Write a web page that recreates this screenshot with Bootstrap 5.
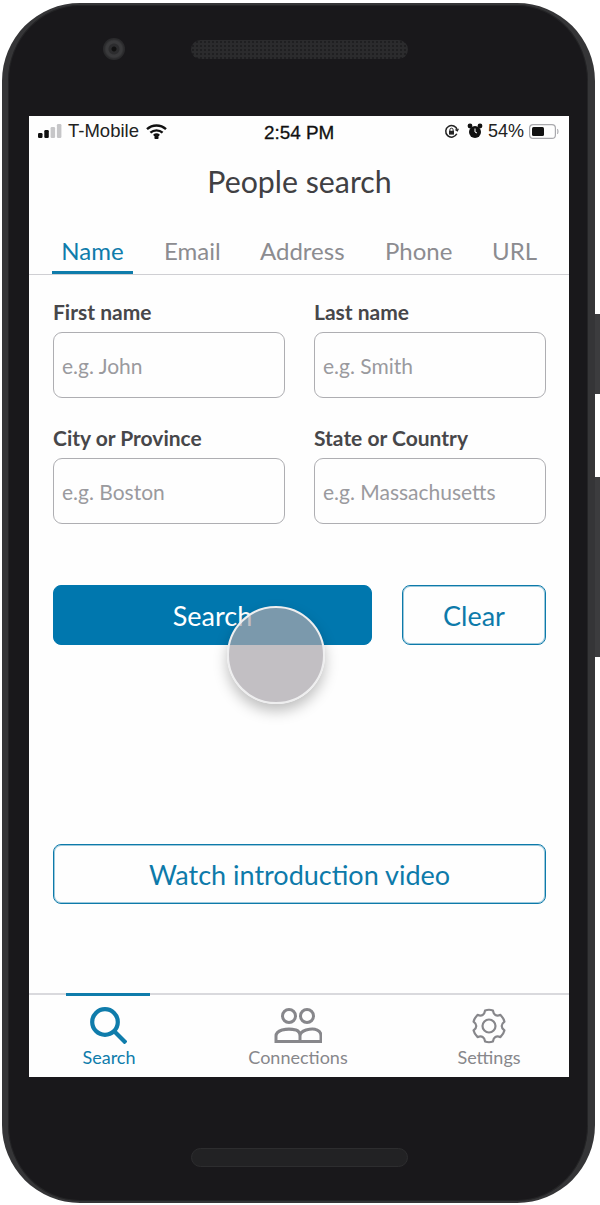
<!DOCTYPE html>
<html lang="en">
<head>
<meta charset="utf-8">
<title>People search</title>
<link href="https://cdn.jsdelivr.net/npm/bootstrap@5.3.0/dist/css/bootstrap.min.css" rel="stylesheet">
<style>
html,body{height:1205px;overflow:hidden;background:#fff}
body{font-family:"Lato","Liberation Sans",sans-serif;padding:3px 5px 2px 2px}
.handset{position:relative;width:593px;height:1200px;background:#19181b;border:solid #353537;border-width:2px 7px 2px 6px;border-radius:78px;padding:111px 19px 0 21px;box-shadow:inset 0 0 0 1px #242426}
.rocker{position:absolute;left:100%;margin-left:7px;width:5px;background:#3c3c3e}
.rocker-a{top:309px;height:80px}
.rocker-b{top:472px;height:180px}
.lens{position:absolute;left:95px;top:33px;width:22px;height:22px;border-radius:50%;background:radial-gradient(circle,#111 0 2px,#2c2c2e 3px 5px,#3a3a3c 6px 8px,#2a2a2c 10px)}
.grille{position:absolute;left:183px;width:217px;height:19px;border-radius:10px;background-color:#2b2b2d;background-image:radial-gradient(#1f1f21 1px,transparent 1.2px);background-size:4px 4px}
.grille-top{top:35px}
.grille-bottom{top:1143px;background-image:none;border:1px solid #2d2d2f;background-color:#222224}
.display{height:961px;width:540px;background:#fefefe;position:relative;overflow:hidden}
.statusline{height:30px;padding:0 10px 0 9px;font-family:"Liberation Sans",sans-serif;font-size:18.500px;color:#222;position:relative}
.clock{position:absolute;left:235px;top:3px;font-size:18.900px;color:#111;-webkit-text-stroke:.3px #111}
.pct{font-size:18px;margin-left:5px;margin-right:1px}
.heading{font-size:30.300px;line-height:36px;color:#404043;text-align:center;margin:17px 0 0;padding-left:1px;font-weight:400}
.tabstrip{margin-top:28px;height:48px;border-bottom:1px solid #cfcfd3;padding-left:23px}
.tabstrip .nav-link{padding:0;height:47px;line-height:48px;font-size:24px;color:#8c8c90;border-radius:0;background:none;position:relative;text-align:center}
.tabstrip .nav-link.active{color:#0f7cab;border-bottom:3px solid #0f7cab}
.t1{width:81px;margin-right:31px}.t2{width:55px;margin-right:41px}.t3{width:84px;margin-right:41px}.t4{width:66px;margin-right:41px}.t5{width:44px}
.formwrap{padding:0 23px 0 24px}
.formwrap .row{--bs-gutter-x:29px}
.fieldname{font-size:21px;font-weight:700;color:#47474a;line-height:24px;margin:0 0 8px;display:block}
.fieldinput{height:66px;border:1px solid #aeaeb2;border-radius:9px;font-size:21px;padding:0 9px 0 8px;background:#fefefe;color:#333}
.fieldinput::placeholder{color:#9a9a9e;opacity:1}
.actionbtn{height:60px;border-radius:8px;font-size:27px;padding:0;line-height:1}
.btn-fill{background:#0077ae;border:1px solid #0077ae;color:#fff}
.btn-line{background:#fefefe;border:1px solid #0d7aaa;box-shadow:inset 0 0 0 1px rgba(13,122,170,.4);color:#0d7aaa}
.touchdot{position:absolute;left:198px;top:490px;width:98px;height:98px;border-radius:50%;background:rgba(170,166,172,.72);border:2px solid #eeeeef;box-shadow:0 7px 14px rgba(0,0,0,.25)}
.bottombar{position:absolute;left:0;right:0;bottom:0;height:84px;border-top:2px solid #d9d9dd}
.bottombar a{position:relative;display:flex;flex-direction:column;align-items:center;text-decoration:none;color:#87878b;font-size:18px;line-height:22px;height:82px}
.bottombar svg{display:block}
.bottombar .on{color:#0f7cab}
.bottombar .on::before{content:"";position:absolute;top:-2px;left:0;right:0;height:3px;background:#0f7cab}
.slot-a{width:84px;margin-left:37px;padding-top:11px}
.slot-b{width:110px;margin-left:93px;padding-top:13px}
.slot-c{width:74px;margin-left:99px;padding-top:13px}
.row.mt-4{margin-top:25px!important}
.r2{margin-top:28px}
.gap-btns{gap:30px;margin-top:61px}
.w-search{width:319px}.w-clear{width:144px}
.w-watch{width:493px;margin-top:199px;display:block}
.navtxt-a{margin-top:2px;margin-left:2px}.navtxt-b{margin-top:3px}.navtxt-c{margin-top:2px}
.icon-a{margin-left:-2px}
.status-carrier{margin-left:6px}
.status-wifi{margin-left:7px}
</style>
</head>
<body>
<div class="handset">
  <span class="rocker rocker-a"></span><span class="rocker rocker-b"></span>
  <span class="lens"></span><span class="grille grille-top"></span><span class="grille grille-bottom"></span>
  <div class="display">
    <div class="statusline d-flex align-items-center">
      <svg width="24" height="14" viewBox="0 0 24 14"><rect x="0" y="9" width="4.500" height="5" rx="1.200" fill="#111"/><rect x="6.300" y="6" width="4.500" height="8" rx="1.200" fill="#111"/><rect x="12.600" y="3" width="4.500" height="11" rx="1.200" fill="#c6c6c8"/><rect x="18.900" y="0" width="4.500" height="14" rx="1.200" fill="#c6c6c8"/></svg>
      <span class="status-carrier">T-Mobile</span>
      <svg class="status-wifi" width="21" height="15" viewBox="0 0 21 15" fill="none" stroke="#111" stroke-width="2.400"><path d="M1 5.200C6.400.3 14.600.3 20 5.200"/><path d="M4.400 8.600c3.500-3 8.700-3 12.200 0"/><path d="M7.800 11.600c1.600-1.200 3.800-1.200 5.400 0"/><circle cx="10.500" cy="13.400" r=".9" fill="#111"/></svg>
      <span class="clock">2:54 PM</span>
      <span class="ms-auto d-flex align-items-center">
        <svg width="15" height="15" viewBox="0 0 15 15" fill="none" stroke="#222" stroke-width="1.500"><path d="M12.800 9.800A5.800 5.800 0 1 1 13.200 6"/><path d="M11.200 5.600l2.200 1.400 1-2.200" stroke-width="1.100"/><rect x="5" y="6.800" width="5" height="3.800" fill="#222" stroke="none"/><path d="M5.900 7V5.800a1.600 1.600 0 0 1 3.200 0V7" stroke-width="1"/></svg>
        <svg class="ms-2" width="16" height="16" viewBox="0 0 16 16"><circle cx="8" cy="9" r="6" fill="#111"/><circle cx="3" cy="3" r="2.400" fill="#111"/><circle cx="13" cy="3" r="2.400" fill="#111"/><path d="M8 5.500V9l2 1" fill="none" stroke="#fff" stroke-width="1"/></svg>
        <span class="pct">54%</span>
        <svg class="ms-1" width="30" height="15" viewBox="0 0 30 15"><rect x=".6" y=".6" width="25.800" height="13.800" rx="3.500" fill="none" stroke="#a9a9ad" stroke-width="1.200"/><rect x="3" y="3" width="12" height="9" rx="1.500" fill="#111"/><path d="M28.200 5.200c1 .5 1 4.100 0 4.600" fill="none" stroke="#a9a9ad" stroke-width="1.200"/></svg>
      </span>
    </div>
    <h1 class="heading">People search</h1>
    <ul class="nav tabstrip">
      <li class="nav-item"><a class="nav-link active t1" href="#">Name</a></li>
      <li class="nav-item"><a class="nav-link t2" href="#">Email</a></li>
      <li class="nav-item"><a class="nav-link t3" href="#">Address</a></li>
      <li class="nav-item"><a class="nav-link t4" href="#">Phone</a></li>
      <li class="nav-item"><a class="nav-link t5" href="#">URL</a></li>
    </ul>
    <form class="formwrap">
      <div class="row mt-4 pt-0">
        <div class="col-6"><label class="fieldname">First name</label><input class="form-control fieldinput" placeholder="e.g. John"></div>
        <div class="col-6"><label class="fieldname">Last name</label><input class="form-control fieldinput" placeholder="e.g. Smith"></div>
      </div>
      <div class="row r2">
        <div class="col-6"><label class="fieldname">City or Province</label><input class="form-control fieldinput" placeholder="e.g. Boston"></div>
        <div class="col-6"><label class="fieldname">State or Country</label><input class="form-control fieldinput" placeholder="e.g. Massachusetts"></div>
      </div>
      <div class="d-flex gap-btns">
        <button type="button" class="btn actionbtn btn-fill w-search">Search</button>
        <button type="button" class="btn actionbtn btn-line w-clear">Clear</button>
      </div>
      <button type="button" class="btn actionbtn btn-line w-watch">Watch introduction video</button>
    </form>
    <span class="touchdot"></span>
    <nav class="bottombar d-flex">
      <a href="#" class="on slot-a"><svg class="icon-a" width="40" height="38" viewBox="0 0 40 38" fill="none" stroke="#0f7cab" stroke-width="4.200"><circle cx="18" cy="16" r="12.800"/><path d="M27 25l12 12"/></svg><span class="navtxt-a">Search</span></a>
      <a href="#" class="slot-b"><svg width="48" height="35" viewBox="0 0 48 35" fill="none" stroke="#87878b" stroke-width="3"><circle cx="15" cy="8" r="6.500"/><circle cx="33" cy="8" r="6.500"/><path d="M2 33.500V28c0-3.500 3-5 6-6 4-1 10-1 14 0 3 1 4 3 4 6v5.500zM26 28c0-3 3-5 6-6 4-1 9-1 11 0 3 1 4 3 4 6v5.500H26"/></svg><span class="navtxt-b">Connections</span></a>
      <a href="#" class="slot-c"><svg width="36" height="36" viewBox="-18 -18 36 36" fill="none" stroke="#87878b" stroke-width="2.200" stroke-linejoin="round"><path d="M-3.900-15.500Q0-17 3.900-15.500Q5-8.700 11.500-11.100Q14.500-8 15.400-4.400Q10 0 15.400 4.400Q14.500 8 11.500 11.100Q5 8.700 3.900 15.500Q0 17-3.900 15.500Q-5 8.700-11.500 11.100Q-14.500 8-15.400 4.400Q-10 0-15.400-4.400Q-14.500-8-11.500-11.100Q-5-8.700-3.900-15.500Z"/><circle r="6.500"/></svg><span class="navtxt-c">Settings</span></a>
    </nav>
  </div>
</div>
</body>
</html>
